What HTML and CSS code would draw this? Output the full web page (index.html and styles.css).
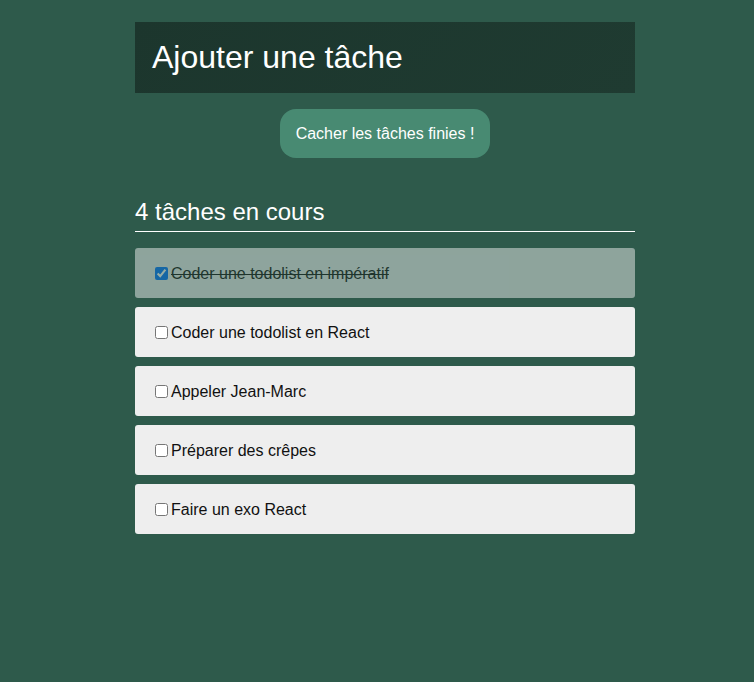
FILE: index.html
```html
<!DOCTYPE html>
<html lang="fr">
<head>
<meta charset="utf-8">
<title>Todolist</title>
<link rel="stylesheet" href="styles.css">
</head>
<body>
<main class="app">
  <header class="add">
    <h1 class="add-title">Ajouter une tâche</h1>
  </header>
  <div class="actions">
    <button class="toggle-btn" type="button">Cacher les tâches finies !</button>
  </div>
  <h2 class="count">4 tâches en cours</h2>
  <ul class="tasks">
    <li class="task task-done"><label><input type="checkbox" checked><span class="task-label">Coder une todolist en impératif</span></label></li>
    <li class="task"><label><input type="checkbox"><span class="task-label">Coder une todolist en React</span></label></li>
    <li class="task"><label><input type="checkbox"><span class="task-label">Appeler Jean-Marc</span></label></li>
    <li class="task"><label><input type="checkbox"><span class="task-label">Préparer des crêpes</span></label></li>
    <li class="task"><label><input type="checkbox"><span class="task-label">Faire un exo React</span></label></li>
  </ul>
</main>
</body>
</html>
```

FILE: styles.css
```css
html, body {
  margin: 0;
  padding: 0;
}
body {
  background: #2e5a4b;
  font-family: "Liberation Sans", Arial, sans-serif;
  color: #111;
  min-height: 100vh;
  padding-left: 16px;
  box-sizing: border-box;
}
.app {
  width: 500px;
  margin: 0 auto;
  padding-top: 22px;
}
.add {
  background: linear-gradient(135deg, #1c362d 0%, #1f3b31 100%);
  height: 71px;
  display: flex;
  align-items: center;
  padding: 0 17px;
  box-sizing: border-box;
}
.add-title {
  margin: 0;
  font-weight: normal;
  font-size: 32px;
  color: #fff;
}
.actions {
  display: flex;
  justify-content: center;
  margin-top: 16px;
}
.toggle-btn {
  background: #488a72;
  color: #fff;
  border: none;
  border-radius: 16px;
  font-family: inherit;
  font-size: 16px;
  height: 49px;
  width: 210px;
  padding: 0;
}
.count {
  margin: 40px 0 16px;
  font-weight: normal;
  font-size: 24px;
  color: #fff;
  border-bottom: 1px solid #fff;
  padding-bottom: 5px;
  line-height: 28px;
}
.tasks {
  list-style: none;
  margin: 0;
  padding: 0;
  display: flex;
  flex-direction: column;
  gap: 9px;
}
.task {
  background: #eeeeee;
  border-radius: 3px;
  padding: 17px 16px 15px;
  font-size: 16px;
  line-height: 18px;
}
.task label {
  display: flex;
  align-items: center;
}
.task input {
  margin: -2px 3px 0 4px;
  width: 13px;
  height: 13px;
}
.task-done {
  opacity: 0.5;
}
.task-done .task-label {
  text-decoration: line-through;
}
```
